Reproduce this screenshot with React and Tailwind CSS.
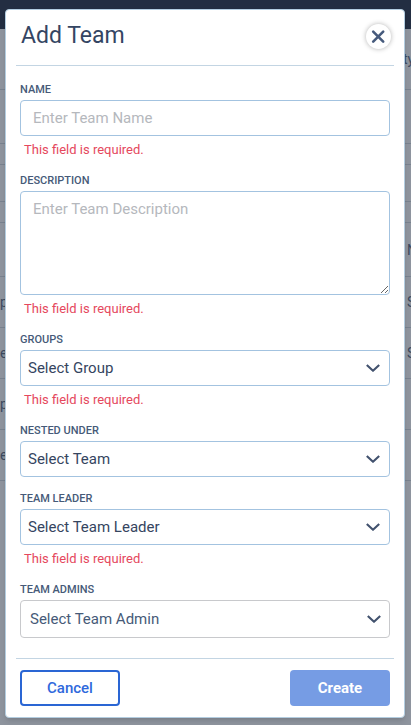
import React, { useState } from "react";

const BACKDROP_ROWS = [
  { left: "", right: "ty", height: "h-[61px]" },
  { left: "", right: "", height: "h-[54px]" },
  { left: "", right: "", height: "h-[21px]" },
  { left: "", right: "", height: "h-[37px]" },
  { left: "", right: "", height: "h-[21px]" },
  { left: "", right: "N", height: "h-[54px]" },
  { left: "p", right: "S", height: "h-[51px]" },
  { left: "er", right: "S", height: "h-[51px]" },
  { left: "p", right: "", height: "h-[51px]" },
  { left: "er", right: "", height: "h-[51px]" },
];

function Backdrop() {
  return (
    <div
      aria-hidden="true"
      className="absolute inset-0 overflow-hidden bg-[#8e949e] text-sm text-[#3c4a60]"
    >
      <div className="h-[29px] bg-[#232e42]" />
      {BACKDROP_ROWS.map((row, idx) => (
        <div
          key={idx}
          className={`flex items-center justify-between border-b border-[#78828f] ${row.height}`}
        >
          <span>{row.left}</span>
          <span className={row.right === "ty" ? "w-2" : "w-1"}>
            {row.right}
          </span>
        </div>
      ))}
    </div>
  );
}

function ChevronDown({ className }) {
  return (
    <svg
      viewBox="0 0 14 9"
      className={`pointer-events-none absolute top-1/2 h-[9px] w-[14px] -translate-y-1/2 ${className}`}
      fill="none"
      stroke="#42526e"
      strokeWidth="2.1"
      strokeLinejoin="round"
    >
      <path d="M.8 1.4 7 7.3l6.2-5.9" />
    </svg>
  );
}

function Field({ id, label, error, children }) {
  return (
    <div className="flex flex-col">
      <label
        htmlFor={id}
        className="text-[11px] leading-5 font-medium text-[#465a78] uppercase"
      >
        {label}
      </label>
      {children}
      {error && (
        <p className="mt-1 pl-1 text-[13px] leading-[19px] text-[#e5485d]">
          {error}
        </p>
      )}
    </div>
  );
}

function SelectBox({ id, placeholder }) {
  return (
    <div className="relative">
      <select
        id={id}
        className="block h-9 w-full appearance-none rounded border border-[#a3c3e0] bg-white px-[7px] text-[15px] text-[#35455f]"
      >
        <option>{placeholder}</option>
      </select>
      <ChevronDown className="right-[10px]" />
    </div>
  );
}

const REQUIRED = "This field is required.";

export default function App() {
  const [name, setName] = useState("");
  const [description, setDescription] = useState("");

  return (
    <div className="relative min-h-screen pt-[9px] pr-[6px] pb-[7px] pl-[5px] font-['Roboto',sans-serif]">
      <Backdrop />

      <div
        role="dialog"
        aria-labelledby="add-team-title"
        className="relative rounded border border-[#b3cde0] bg-white px-[10px] shadow-md"
      >
        <header className="flex h-14 items-center justify-between border-b border-[#c3d5e3] pr-[3px] pb-[3px] pl-[5px]">
          <h1
            id="add-team-title"
            className="text-[23px] font-normal text-[#344563]"
          >
            Add Team
          </h1>
          <button
            type="button"
            aria-label="Close"
            className="flex size-[25px] items-center justify-center rounded-full bg-white shadow-[0_0_5px_rgba(0,0,0,0.3)]"
          >
            <svg
              viewBox="0 0 15 15"
              className="size-[15px]"
              fill="none"
              stroke="#465a7c"
              strokeWidth="2.6"
              strokeLinecap="round"
            >
              <path d="M2.2 2.7l10 10M12.2 2.7l-10 10" />
            </svg>
          </button>
        </header>

        <form onSubmit={(e) => e.preventDefault()}>
          <div className="flex flex-col gap-3 px-1 pt-[14px] pb-5">
            <Field id="name" label="Name" error={REQUIRED}>
              <input
                id="name"
                type="text"
                value={name}
                onChange={(e) => setName(e.target.value)}
                placeholder="Enter Team Name"
                className="h-9 rounded border border-[#a3c3e0] px-3 text-[15px] text-[#35455f] placeholder:text-[#b5b8bd]"
              />
            </Field>

            <Field id="description" label="Description" error={REQUIRED}>
              <textarea
                id="description"
                value={description}
                onChange={(e) => setDescription(e.target.value)}
                placeholder="Enter Team Description"
                className="h-[104px] rounded border border-[#a3c3e0] px-3 py-[5px] text-[15px] leading-6 text-[#35455f] placeholder:text-[#b5b8bd]"
              />
            </Field>

            <Field id="groups" label="Groups" error={REQUIRED}>
              <SelectBox id="groups" placeholder="Select Group" />
            </Field>

            <Field id="nested" label="Nested Under">
              <SelectBox id="nested" placeholder="Select Team" />
            </Field>

            <Field id="leader" label="Team Leader" error={REQUIRED}>
              <SelectBox id="leader" placeholder="Select Team Leader" />
            </Field>

            <Field id="admins" label="Team Admins">
              <div className="relative">
                <select
                  id="admins"
                  className="block h-[38px] w-full appearance-none rounded border border-[#c8c9cc] bg-white px-[9px] text-[15px] text-[#465a78]"
                >
                  <option>Select Team Admin</option>
                </select>
                <ChevronDown className="right-[9px]" />
              </div>
            </Field>
          </div>

          <footer className="flex justify-between border-t border-[#c3d5e3] px-1 py-[11px]">
            <button
              type="button"
              className="h-9 w-[100px] rounded border-2 border-[#2a66d4] text-[15px] font-medium text-[#2f69dc]"
            >
              Cancel
            </button>
            <button
              type="submit"
              className="h-9 w-[100px] rounded bg-[#769ce4] text-[15px] font-bold text-white"
            >
              Create
            </button>
          </footer>
        </form>
      </div>
    </div>
  );
}
